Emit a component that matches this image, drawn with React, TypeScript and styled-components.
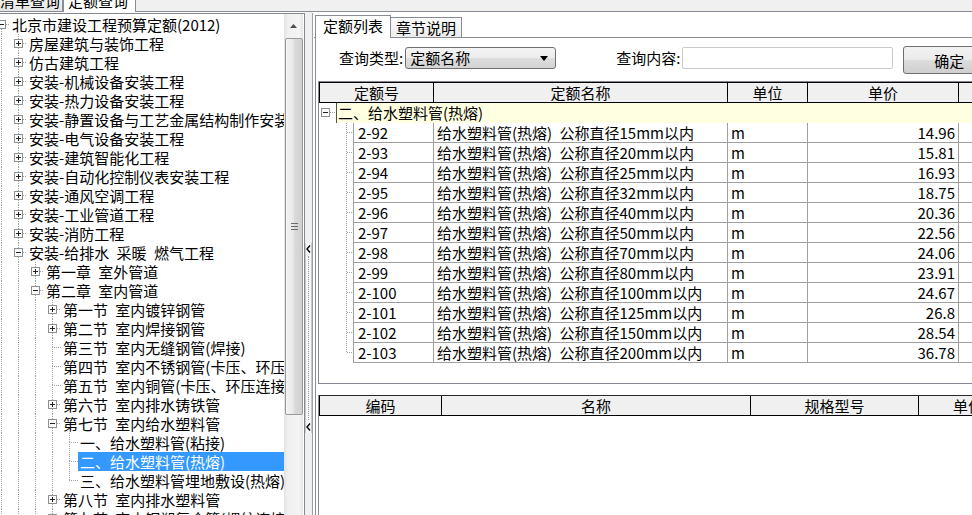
import styled, { createGlobalStyle } from "styled-components";

const FONT = `"Noto Sans CJK SC", "Noto Sans", sans-serif`;

const GlobalStyle = createGlobalStyle`
  html, body {
    margin: 0;
    padding: 0;
    background: #f0f0f0;
    overflow: hidden;
  }
  body {
    font-family: ${FONT};
    font-size: 15px;
    color: #000;
  }
`;

interface TreeNode {
  label: string;
  level: number;
  toggle?: "plus" | "minus";
  selected?: boolean;
}

const treeNodes: TreeNode[] = [
  { label: "北京市建设工程预算定额(2012)", level: 0, toggle: "minus" },
  { label: "房屋建筑与装饰工程", level: 1, toggle: "plus" },
  { label: "仿古建筑工程", level: 1, toggle: "plus" },
  { label: "安装-机械设备安装工程", level: 1, toggle: "plus" },
  { label: "安装-热力设备安装工程", level: 1, toggle: "plus" },
  { label: "安装-静置设备与工艺金属结构制作安装工程", level: 1, toggle: "plus" },
  { label: "安装-电气设备安装工程", level: 1, toggle: "plus" },
  { label: "安装-建筑智能化工程", level: 1, toggle: "plus" },
  { label: "安装-自动化控制仪表安装工程", level: 1, toggle: "plus" },
  { label: "安装-通风空调工程", level: 1, toggle: "plus" },
  { label: "安装-工业管道工程", level: 1, toggle: "plus" },
  { label: "安装-消防工程", level: 1, toggle: "plus" },
  { label: "安装-给排水 采暖 燃气工程", level: 1, toggle: "minus" },
  { label: "第一章 室外管道", level: 2, toggle: "plus" },
  { label: "第二章 室内管道", level: 2, toggle: "minus" },
  { label: "第一节 室内镀锌钢管", level: 3, toggle: "plus" },
  { label: "第二节 室内焊接钢管", level: 3, toggle: "plus" },
  { label: "第三节 室内无缝钢管(焊接)", level: 3 },
  { label: "第四节 室内不锈钢管(卡压、环压连接)", level: 3 },
  { label: "第五节 室内铜管(卡压、环压连接)", level: 3 },
  { label: "第六节 室内排水铸铁管", level: 3, toggle: "plus" },
  { label: "第七节 室内给水塑料管", level: 3, toggle: "minus" },
  { label: "一、给水塑料管(粘接)", level: 4 },
  { label: "二、给水塑料管(热熔)", level: 4, selected: true },
  { label: "三、给水塑料管埋地敷设(热熔)", level: 4 },
  { label: "第八节 室内排水塑料管", level: 3, toggle: "plus" },
  { label: "第九节 室内钢塑复合管(螺纹连接)", level: 3, toggle: "plus" },
  { label: "第十节 室内复合管", level: 3, toggle: "plus" },
  { label: "第三章 管道附件", level: 2, toggle: "plus" },
  { label: "安装-刷油、防腐蚀、绝热工程", level: 1, toggle: "plus" },
  { label: "北京市建设工程预算定额(2001)", level: 0, toggle: "plus" },
];

function hasNextSibling(nodes: TreeNode[], idx: number) {
  const lv = nodes[idx].level;
  for (let j = idx + 1; j < nodes.length; j++) {
    if (nodes[j].level < lv) return false;
    if (nodes[j].level === lv) return true;
  }
  return false;
}

const treeRows = treeNodes.map((node, i) => {
  const guides: boolean[] = [];
  for (let k = 0; k < node.level; k++) {
    let anc = -1;
    for (let j = i - 1; j >= 0; j--) {
      if (treeNodes[j].level === k) {
        anc = j;
        break;
      }
    }
    guides.push(anc >= 0 && hasNextSibling(treeNodes, anc));
  }
  return { ...node, guides, first: i === 0, next: hasNextSibling(treeNodes, i) };
});

const sizes = [15, 20, 25, 32, 40, 50, 70, 80, 100, 125, 150, 200];
const prices = ["14.96", "15.81", "16.93", "18.75", "20.36", "22.56", "24.06", "23.91", "24.67", "26.8", "28.54", "36.78"];
const quotaRows = sizes.map((s, i) => ({
  code: `2-${92 + i}`,
  name: `给水塑料管(热熔) 公称直径${s}mm以内`,
  unit: "m",
  price: prices[i],
}));

const DOT = "#a0a0a0";

function ToggleBox({ x, y, kind }: { x: number; y: number; kind: "plus" | "minus" }) {
  return (
    <g>
      <rect x={x + 0.5} y={y + 0.5} width="8" height="8" fill="#fbfbfb" stroke="#8e8f8f" />
      <line x1={x + 2} y1={y + 4.5} x2={x + 7} y2={y + 4.5} stroke="#222" />
      {kind === "plus" && <line x1={x + 4.5} y1={y + 2} x2={x + 4.5} y2={y + 7} stroke="#222" />}
    </g>
  );
}

function Guide() {
  return (
    <svg width="17" height="19" shapeRendering="crispEdges">
      <line x1="8.5" y1="0" x2="8.5" y2="19" stroke={DOT} strokeDasharray="1 1" />
    </svg>
  );
}

function Connector({ top, bottom, toggle }: { top: boolean; bottom: boolean; toggle?: "plus" | "minus" }) {
  return (
    <svg width="17" height="19" shapeRendering="crispEdges">
      {top && <line x1="8.5" y1="0" x2="8.5" y2={toggle ? 5 : 10} stroke={DOT} strokeDasharray="1 1" />}
      {bottom && <line x1="8.5" y1={toggle ? 14 : 9} x2="8.5" y2="19" stroke={DOT} strokeDasharray="1 1" />}
      <line x1={toggle ? 13 : 8} y1="9.5" x2="17" y2="9.5" stroke={DOT} strokeDasharray="1 1" />
      {toggle && <ToggleBox x={4} y={5} kind={toggle} />}
    </svg>
  );
}

export default function App() {
  return (
    <Screen>
      <GlobalStyle />
      <TopStrip>
        <TopTab>
          <span>清单查询</span>
        </TopTab>
        <TopTab $active>
          <span>定额查询</span>
        </TopTab>
        <TopFiller />
      </TopStrip>

      <Main>
        <LeftPanel>
          <TreeArea>
            <TreeList>
              {treeRows.map((r, i) => (
                <TreeRow key={i}>
                  {r.guides.map((g, k) => (g ? <Guide key={k} /> : <Blank key={k} />))}
                  <Connector top={!r.first} bottom={r.next} toggle={r.toggle} />
                  <TreeLabel $selected={r.selected}>{r.label}</TreeLabel>
                </TreeRow>
              ))}
            </TreeList>
          </TreeArea>
          <Scrollbar>
            <ScrollArrow>
              <svg width="7" height="4">
                <path d="M0 4 L3.5 0 L7 4 Z" fill="#4d4d4d" />
              </svg>
            </ScrollArrow>
            <ScrollThumb>
              <svg width="7" height="7" shapeRendering="crispEdges">
                <line x1="0" y1="0.5" x2="7" y2="0.5" stroke="#6a6a6a" />
                <line x1="0" y1="3.5" x2="7" y2="3.5" stroke="#6a6a6a" />
                <line x1="0" y1="6.5" x2="7" y2="6.5" stroke="#6a6a6a" />
              </svg>
            </ScrollThumb>
          </Scrollbar>
        </LeftPanel>

        <Splitter>
          <HotZone>
            <svg width="5" height="8">
              <polyline points="4,0.5 1,4 4,7.5" fill="none" stroke="#000" strokeWidth="1.4" />
            </svg>
            <HotDots />
            <svg width="5" height="8">
              <polyline points="4,0.5 1,4 4,7.5" fill="none" stroke="#000" strokeWidth="1.4" />
            </svg>
          </HotZone>
        </Splitter>

        <RightPanel>
          <TabBar>
            <PageTab $active>定额列表</PageTab>
            <PageTab>章节说明</PageTab>
          </TabBar>
          <TabPage>
            <QueryRow>
              <QueryLabel>查询类型:</QueryLabel>
              <Select>
                <span>定额名称</span>
                <svg width="8" height="5">
                  <path d="M0 0 L8 0 L4 5 Z" fill="#000" />
                </svg>
              </Select>
              <QueryLabel $gap={60}>查询内容:</QueryLabel>
              <TextInput />
              <OkButton>确定</OkButton>
            </QueryRow>

            <QuotaGrid>
              <QuotaHeader>
                <HeadCell $first>定额号</HeadCell>
                <HeadCell>定额名称</HeadCell>
                <HeadCell>单位</HeadCell>
                <HeadCell>单价</HeadCell>
                <HeadCell />
              </QuotaHeader>
              <GroupRow>
                <svg width="17" height="20" shapeRendering="crispEdges">
                  <line x1="11" y1="9.5" x2="17" y2="9.5" stroke={DOT} strokeDasharray="1 1" />
                  <ToggleBox x={2} y={5} kind="minus" />
                </svg>
                <GroupLabel>二、给水塑料管(热熔)</GroupLabel>
              </GroupRow>
              {quotaRows.map((row, i) => (
                <QuotaRow key={row.code}>
                  <svg width="34" height="20" shapeRendering="crispEdges">
                    <line
                      x1="27.5"
                      y1="0"
                      x2="27.5"
                      y2={i === quotaRows.length - 1 ? 10 : 20}
                      stroke={DOT}
                      strokeDasharray="1 1"
                    />
                    <line x1="28" y1="9.5" x2="34" y2="9.5" stroke={DOT} strokeDasharray="1 1" />
                  </svg>
                  <Cell $code>{row.code}</Cell>
                  <Cell>{row.name}</Cell>
                  <Cell>{row.unit}</Cell>
                  <Cell $right>{row.price}</Cell>
                  <Cell $last />
                </QuotaRow>
              ))}
            </QuotaGrid>

            <MaterialGrid>
              <MaterialHeader>
                <HeadCell $first>编码</HeadCell>
                <HeadCell>名称</HeadCell>
                <HeadCell>规格型号</HeadCell>
                <HeadCell>单位</HeadCell>
              </MaterialHeader>
            </MaterialGrid>
          </TabPage>
        </RightPanel>
      </Main>
    </Screen>
  );
}

const Screen = styled.div`
  width: 972px;
  height: 515px;
  overflow: hidden;
  display: flex;
  flex-direction: column;
  background: #f0f0f0;
  font-family: ${FONT};
`;

const TopStrip = styled.div`
  display: flex;
  height: 12px;
  flex: none;
  overflow: hidden;
`;

const TopTab = styled.div<{ $active?: boolean }>`
  box-sizing: border-box;
  height: 12px;
  display: flex;
  align-items: flex-end;
  line-height: 15px;
  padding-bottom: ${(p) => (p.$active ? 4 : 3)}px;
  width: ${(p) => (p.$active ? 73 : 63)}px;
  justify-content: ${(p) => (p.$active ? "flex-start" : "flex-end")};
  padding-left: ${(p) => (p.$active ? 4 : 0)}px;
  padding-right: ${(p) => (p.$active ? 0 : 2)}px;
  background: ${(p) => (p.$active ? "#ffffff" : "linear-gradient(#f2f2f2, #e3e3e3)")};
  border-right: 1px solid #898c95;
  border-left: ${(p) => (p.$active ? "1px solid #898c95" : "none")};
  border-bottom: ${(p) => (p.$active ? "none" : "1px solid #898c95")};
  white-space: nowrap;
`;

const TopFiller = styled.div`
  flex: 1;
  border-bottom: 1px solid #898c95;
`;

const Main = styled.div`
  flex: 1;
  display: flex;
  min-height: 0;
  background: #ffffff;
`;

const LeftPanel = styled.div`
  box-sizing: border-box;
  width: 305px;
  flex: none;
  margin-top: 1px;
  display: flex;
  background: #ffffff;
  border-top: 1px solid #828790;
  border-right: 1px solid #828790;
  padding-right: 1px;
`;

const TreeArea = styled.div`
  flex: 1;
  overflow: hidden;
  padding-top: 1px;
`;

const TreeList = styled.div`
  margin-left: -7px;
`;

const TreeRow = styled.div`
  display: flex;
  height: 19px;
  white-space: nowrap;
  overflow: hidden;

  svg {
    flex: none;
  }
`;

const Blank = styled.div`
  width: 17px;
  flex: none;
`;

const TreeLabel = styled.div<{ $selected?: boolean }>`
  flex: 1;
  padding-left: 2px;
  line-height: 19px;
  word-spacing: 4px;
  overflow: hidden;
  background: ${(p) => (p.$selected ? "#3399ff" : "transparent")};
  color: ${(p) => (p.$selected ? "#ffffff" : "#000000")};
`;

const Scrollbar = styled.div`
  width: 19px;
  flex: none;
  display: flex;
  flex-direction: column;
  background: linear-gradient(to right, #e2e2e2, #f0f0f0 20%, #f4f4f4 80%, #e6e6e6);
`;

const ScrollArrow = styled.div`
  height: 24px;
  display: flex;
  align-items: center;
  justify-content: center;
`;

const ScrollThumb = styled.div`
  box-sizing: border-box;
  height: 377px;
  margin: 0 0 0 1px;
  border: 1px solid #9a9a9a;
  border-radius: 2px;
  background: linear-gradient(to right, #f4f4f4, #e8e8e8 45%, #d9d9d9 55%, #d0d0d0);
  display: flex;
  align-items: center;
  justify-content: center;
`;

const Splitter = styled.div`
  width: 7px;
  flex: none;
  background: #f0f0f0;
  padding-top: 231px;
`;

const HotZone = styled.div`
  box-sizing: border-box;
  height: 190px;
  display: flex;
  flex-direction: column;
  align-items: center;
  padding: 2px 0;
  background: #f7f7f7;
  border-left: 1px solid #c8c8c8;
  border-right: 1px solid #c8c8c8;
`;

const HotDots = styled.div`
  flex: 1;
  width: 0;
  margin: 3px 0;
  border-left: 1px dotted #8a9ab0;
`;

const RightPanel = styled.div`
  flex: 1;
  min-width: 0;
  margin-top: 1px;
  overflow: hidden;
  display: flex;
  flex-direction: column;
  border-left: 1px solid #a0a0a0;
  padding-left: 1px;
  background: #ffffff;
`;

const TabBar = styled.div`
  box-sizing: border-box;
  height: 25px;
  flex: none;
  width: 720px;
  display: flex;
  align-items: flex-end;
  padding-left: 1px;
  border-bottom: 1px solid #898c95;
`;

const PageTab = styled.div<{ $active?: boolean }>`
  box-sizing: border-box;
  height: ${(p) => (p.$active ? 23 : 20)}px;
  margin-bottom: ${(p) => (p.$active ? -1 : 0)}px;
  padding: 0 ${(p) => (p.$active ? 7 : 5)}px;
  line-height: ${(p) => (p.$active ? 20 : 19)}px;
  border: 1px solid #898c95;
  border-bottom: none;
  border-left: ${(p) => (p.$active ? "1px solid #898c95" : "none")};
  background: ${(p) => (p.$active ? "#ffffff" : "linear-gradient(#fafafa, #ececec)")};
  white-space: nowrap;
`;

const TabPage = styled.div`
  flex: 1;
  width: 700px;
  margin-left: 1px;
  display: flex;
  flex-direction: column;
  border-left: 1px solid #898c95;
  padding: 8px 0 0 2px;
  min-height: 0;
`;

const QueryRow = styled.div`
  height: 28px;
  flex: none;
  display: flex;
  align-items: flex-start;
  padding-left: 21px;
  white-space: nowrap;
`;

const QueryLabel = styled.div<{ $gap?: number }>`
  margin: 1px 2px 0 ${(p) => p.$gap ?? 0}px;
  line-height: 22px;
`;

const Select = styled.div`
  box-sizing: border-box;
  width: 151px;
  height: 22px;
  margin-top: 1px;
  flex: none;
  display: flex;
  align-items: center;
  justify-content: space-between;
  padding: 0 7px 0 4px;
  border: 1px solid #707070;
  border-radius: 3px;
  background: linear-gradient(#f4f4f4, #ececec 50%, #dedede 50%, #d3d3d3);
  line-height: 20px;
`;

const TextInput = styled.div`
  box-sizing: border-box;
  width: 211px;
  height: 22px;
  margin-top: 1px;
  flex: none;
  border: 1px solid #c9c9c9;
  border-radius: 2px;
  background: #ffffff;
`;

const OkButton = styled.div`
  box-sizing: border-box;
  width: 92px;
  height: 28px;
  margin-left: 10px;
  flex: none;
  display: flex;
  align-items: center;
  justify-content: center;
  border: 1px solid #707070;
  border-radius: 3px;
  background: linear-gradient(#f2f2f2, #ebebeb 50%, #dddddd 50%, #cfcfcf);
`;

const QuotaGrid = styled.div`
  box-sizing: border-box;
  height: 303px;
  flex: none;
  margin-top: 7px;
  border: 1px solid #828790;
  border-right: none;
  background: #ffffff;
`;

const QuotaHeader = styled.div`
  display: grid;
  grid-template-columns: 115px 294px 80px 151px 1fr;
  border-top: 1px solid #000;
  border-bottom: 1px solid #000;
  background: #f0f0f0;
`;

const HeadCell = styled.div<{ $first?: boolean }>`
  height: 19px;
  line-height: 19px;
  text-align: center;
  border-right: 1px solid #000;
  border-left: ${(p) => (p.$first ? "1px solid #000" : "none")};
  white-space: nowrap;
`;

const GroupRow = styled.div`
  display: flex;
  height: 20px;

  svg {
    flex: none;
  }
`;

const GroupLabel = styled.div`
  flex: 1;
  padding-left: 1px;
  line-height: 20px;
  background: #ffffe1;
  border-left: 1px solid #505050;
  white-space: nowrap;
`;

const QuotaRow = styled.div`
  display: grid;
  grid-template-columns: 34px 81px 294px 80px 151px 1fr;
  height: 20px;
`;

const Cell = styled.div<{ $code?: boolean; $right?: boolean; $last?: boolean }>`
  box-sizing: border-box;
  height: 20px;
  line-height: 19px;
  border-bottom: 1px solid #a0a0a0;
  border-right: ${(p) => (p.$last ? "none" : "1px solid #a0a0a0")};
  border-left: ${(p) => (p.$code ? "1px solid #a0a0a0" : "none")};
  padding: 0 3px 0 ${(p) => (p.$code ? 4 : 3)}px;
  text-align: ${(p) => (p.$right ? "right" : "left")};
  word-spacing: 4px;
  white-space: nowrap;
  overflow: hidden;
`;

const MaterialGrid = styled.div`
  flex: 1;
  margin-top: 11px;
  border-left: 1px solid #828790;
  background: #ffffff;
`;

const MaterialHeader = styled.div`
  display: grid;
  grid-template-columns: 123px 309px 168px 1fr;
  border-top: 1px solid #2a2a2a;
  border-bottom: 1px solid #000;
  background: #f0f0f0;
`;
